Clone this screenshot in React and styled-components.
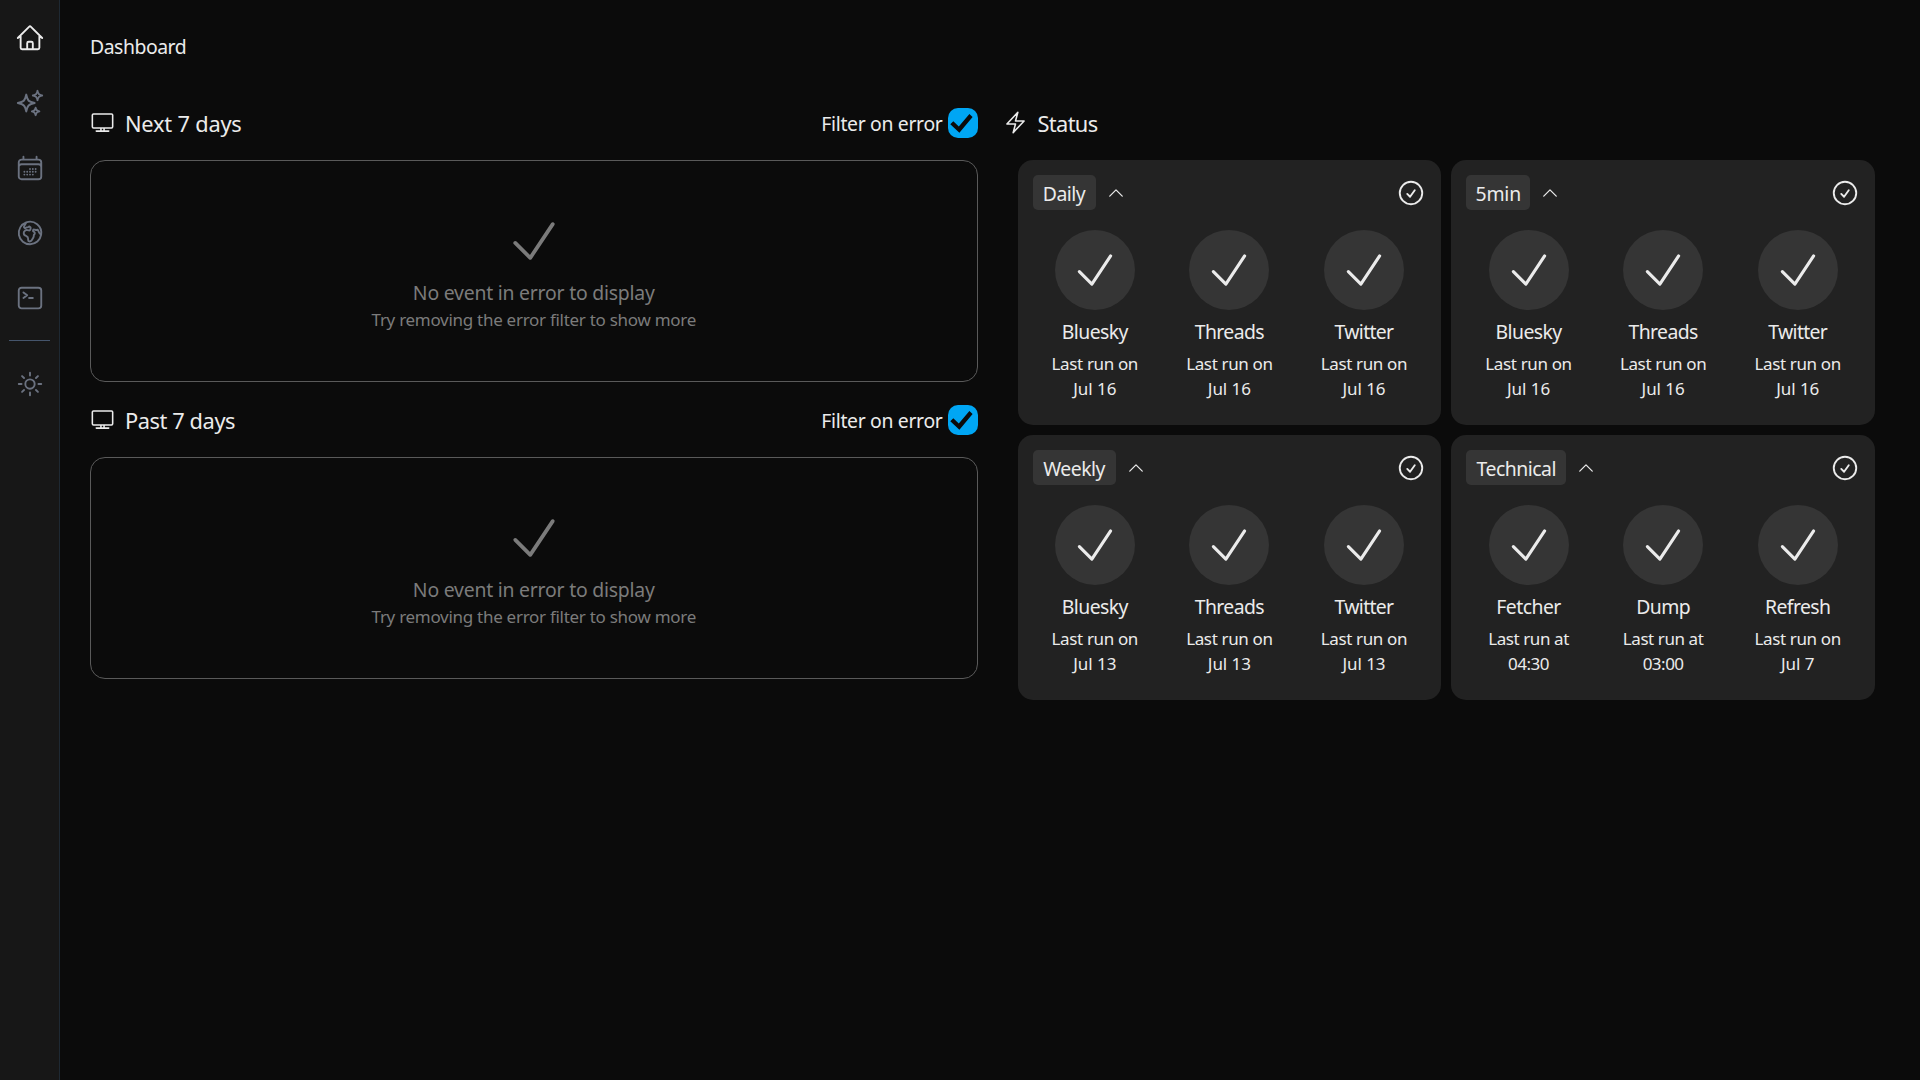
import React from "react";
import styled, { createGlobalStyle } from "styled-components";
import {
  HiOutlineHome,
  HiOutlineSparkles,
  HiOutlineCalendarDays,
  HiOutlineGlobeEuropeAfrica,
  HiOutlineCommandLine,
  HiOutlineSun,
  HiOutlineTv,
  HiOutlineBolt,
  HiOutlineCheck,
  HiOutlineCheckCircle,
  HiOutlineChevronUp,
} from "react-icons/hi2";

const GlobalStyle = createGlobalStyle`
  *, *::before, *::after { box-sizing: border-box; }
  body {
    margin: 0;
    background: #0b0b0b;
    color: #ebebeb;
    font-family: "Segoe UI", "Noto Sans", "Open Sans", sans-serif;
    font-size: 19.4px;
  }
`;

const Shell = styled.div`
  display: flex;
  min-height: 100vh;
`;

const Sidebar = styled.nav`
  flex: 0 0 60px;
  display: flex;
  flex-direction: column;
  align-items: flex-start;
  padding: 23px 0 0 15px;
  background: #171717;
  border-right: 1px solid #1e2933;
`;

const NavLink = styled.a`
  display: flex;
  margin-bottom: 35px;
  font-size: 30px;
  color: ${(p) => (p.$active ? "#ebebeb" : "#6b7280")};
`;

const Divider = styled.hr`
  width: 41px;
  height: 1px;
  margin: -8px 0 28px -6px;
  border: 0;
  background: #45556c;
`;

const Main = styled.main`
  flex: 1;
  padding: 31px 30px 0;
`;

const Title = styled.h1`
  margin: 0 0 46px;
  font-size: inherit;
  font-weight: 400;
  line-height: 31px;
  letter-spacing: -0.46px;
`;

const Columns = styled.div`
  display: grid;
  grid-template-columns: 1fr 1fr;
  gap: 25px;
`;

const SectionHeader = styled.header`
  display: flex;
  align-items: center;
  justify-content: space-between;
  height: 30px;
  margin-bottom: 22px;
`;

const Heading = styled.h2`
  display: flex;
  align-items: center;
  gap: 10px;
  margin: 0;
  font-size: 21.8px;
  font-weight: 400;
  line-height: 30px;

  svg {
    width: 25px;
    height: 25px;
    margin-bottom: 1px;
  }
`;

const Text = styled.span`
  letter-spacing: ${(p) => p.$track}px;
  white-space: nowrap;
`;

const HeadingText = styled(Text)`
  padding-top: 1px;
`;

const Filter = styled.label`
  display: flex;
  align-items: center;
  gap: 5px;
  line-height: 30px;
`;

const Checkbox = styled.span`
  display: flex;
  width: 30px;
  height: 30px;
  border-radius: 10px;
  background: #00a6f4;
`;

const EmptyBox = styled.div`
  display: flex;
  flex-direction: column;
  align-items: center;
  height: 222px;
  margin-bottom: 23px;
  padding-top: 50px;
  border: 1px solid #5a5a5a;
  border-radius: 15px;
  color: #7b7b7b;

  svg {
    width: 60px;
    height: 60px;
  }
`;

const EmptyTitle = styled(Text)`
  margin-top: 7px;
  line-height: 29px;
`;

const EmptyHint = styled(Text)`
  font-size: 17px;
  line-height: 25px;
`;

const CardGrid = styled.div`
  display: grid;
  grid-template-columns: 1fr 1fr;
  gap: 10px;
  padding: 0 15px;
`;

const Card = styled.section`
  height: 265px;
  padding: 15px 10px;
  border-radius: 15px;
  background: #222222;
`;

const CardHeader = styled.div`
  display: flex;
  align-items: center;
  gap: 10px;
  height: 35px;
  margin: 0 5px 20px;
`;

const Badge = styled.span`
  display: flex;
  justify-content: center;
  width: ${(p) => p.$width}px;
  height: 35px;
  padding-top: 1px;
  border-radius: 5px;
  background: #353535;
  line-height: 35px;
`;

const StateIcon = styled(HiOutlineCheckCircle)`
  width: 30px;
  height: 30px;
  margin-left: auto;
`;

const Jobs = styled.div`
  display: grid;
  grid-template-columns: repeat(3, 1fr);
`;

const Job = styled.div`
  display: flex;
  flex-direction: column;
  align-items: center;
`;

const Circle = styled.div`
  display: grid;
  place-items: center;
  width: 80px;
  height: 80px;
  margin-bottom: 7px;
  border-radius: 50%;
  background: #353535;

  svg {
    width: 50px;
    height: 50px;
  }
`;

const JobName = styled(Text)`
  margin-bottom: 4px;
  line-height: 30px;
`;

const JobRun = styled(Text)`
  font-size: 17px;
  line-height: 25px;
`;

const tracking = {
  "Next 7 days": -0.2,
  "Past 7 days": -0.42,
  Status: -0.64,
  Daily: -0.5,
  "5min": -0.15,
  Weekly: -0.55,
  Technical: -0.48,
  Bluesky: -0.6,
  Threads: -0.6,
  Twitter: -0.7,
  Fetcher: -0.55,
  Dump: -0.6,
  Refresh: -0.6,
  "Last run on": -0.36,
  "Last run at": -0.42,
  "04:30": -0.5,
  "03:00": -0.5,
};
const track = (text) => tracking[text] ?? -0.05;

const socialJobs = (when) =>
  ["Bluesky", "Threads", "Twitter"].map((name) => ({ name, label: "Last run on", when }));

const groups = [
  { title: "Daily", width: 63, jobs: socialJobs("Jul 16") },
  { title: "5min", width: 64, jobs: socialJobs("Jul 16") },
  { title: "Weekly", width: 83, jobs: socialJobs("Jul 13") },
  {
    title: "Technical",
    width: 100,
    jobs: [
      { name: "Fetcher", label: "Last run at", when: "04:30" },
      { name: "Dump", label: "Last run at", when: "03:00" },
      { name: "Refresh", label: "Last run on", when: "Jul 7" },
    ],
  },
];

const navIcons = [
  HiOutlineHome,
  HiOutlineSparkles,
  HiOutlineCalendarDays,
  HiOutlineGlobeEuropeAfrica,
  HiOutlineCommandLine,
];

function EventSection({ title }) {
  return (
    <section>
      <SectionHeader>
        <Heading>
          <HiOutlineTv />
          <HeadingText $track={track(title)}>{title}</HeadingText>
        </Heading>
        <Filter>
          <HeadingText $track={-0.33}>Filter on error</HeadingText>
          <Checkbox role="checkbox" aria-checked="true">
            <svg width="30" height="30" viewBox="0 0 30 30">
              <path d="M2.3 16.3 5.3 13.3 10.8 18.6 21.4 6 24.6 9 11.4 24.8Z" fill="#0b0b0b" />
            </svg>
          </Checkbox>
        </Filter>
      </SectionHeader>
      <EmptyBox>
        <HiOutlineCheck />
        <EmptyTitle $track={-0.22}>No event in error to display</EmptyTitle>
        <EmptyHint $track={-0.285}>Try removing the error filter to show more</EmptyHint>
      </EmptyBox>
    </section>
  );
}

function StatusCard({ title, width, jobs }) {
  return (
    <Card>
      <CardHeader>
        <Badge $width={width}>
          <Text $track={track(title)}>{title}</Text>
        </Badge>
        <HiOutlineChevronUp size={20} />
        <StateIcon />
      </CardHeader>
      <Jobs>
        {jobs.map((job) => (
          <Job key={job.name}>
            <Circle>
              <HiOutlineCheck />
            </Circle>
            <JobName $track={track(job.name)}>{job.name}</JobName>
            <JobRun $track={track(job.label)}>{job.label}</JobRun>
            <JobRun $track={track(job.when)}>{job.when}</JobRun>
          </Job>
        ))}
      </Jobs>
    </Card>
  );
}

export default function App() {
  return (
    <Shell>
      <GlobalStyle />
      <Sidebar>
        {navIcons.map((Icon, i) => (
          <NavLink key={i} $active={i === 0}>
            <Icon />
          </NavLink>
        ))}
        <Divider />
        <NavLink>
          <HiOutlineSun />
        </NavLink>
      </Sidebar>
      <Main>
        <Title>Dashboard</Title>
        <Columns>
          <div>
            <EventSection title="Next 7 days" />
            <EventSection title="Past 7 days" />
          </div>
          <section>
            <SectionHeader>
              <Heading>
                <HiOutlineBolt />
                <HeadingText $track={track("Status")}>Status</HeadingText>
              </Heading>
            </SectionHeader>
            <CardGrid>
              {groups.map((group) => (
                <StatusCard key={group.title} {...group} />
              ))}
            </CardGrid>
          </section>
        </Columns>
      </Main>
    </Shell>
  );
}
